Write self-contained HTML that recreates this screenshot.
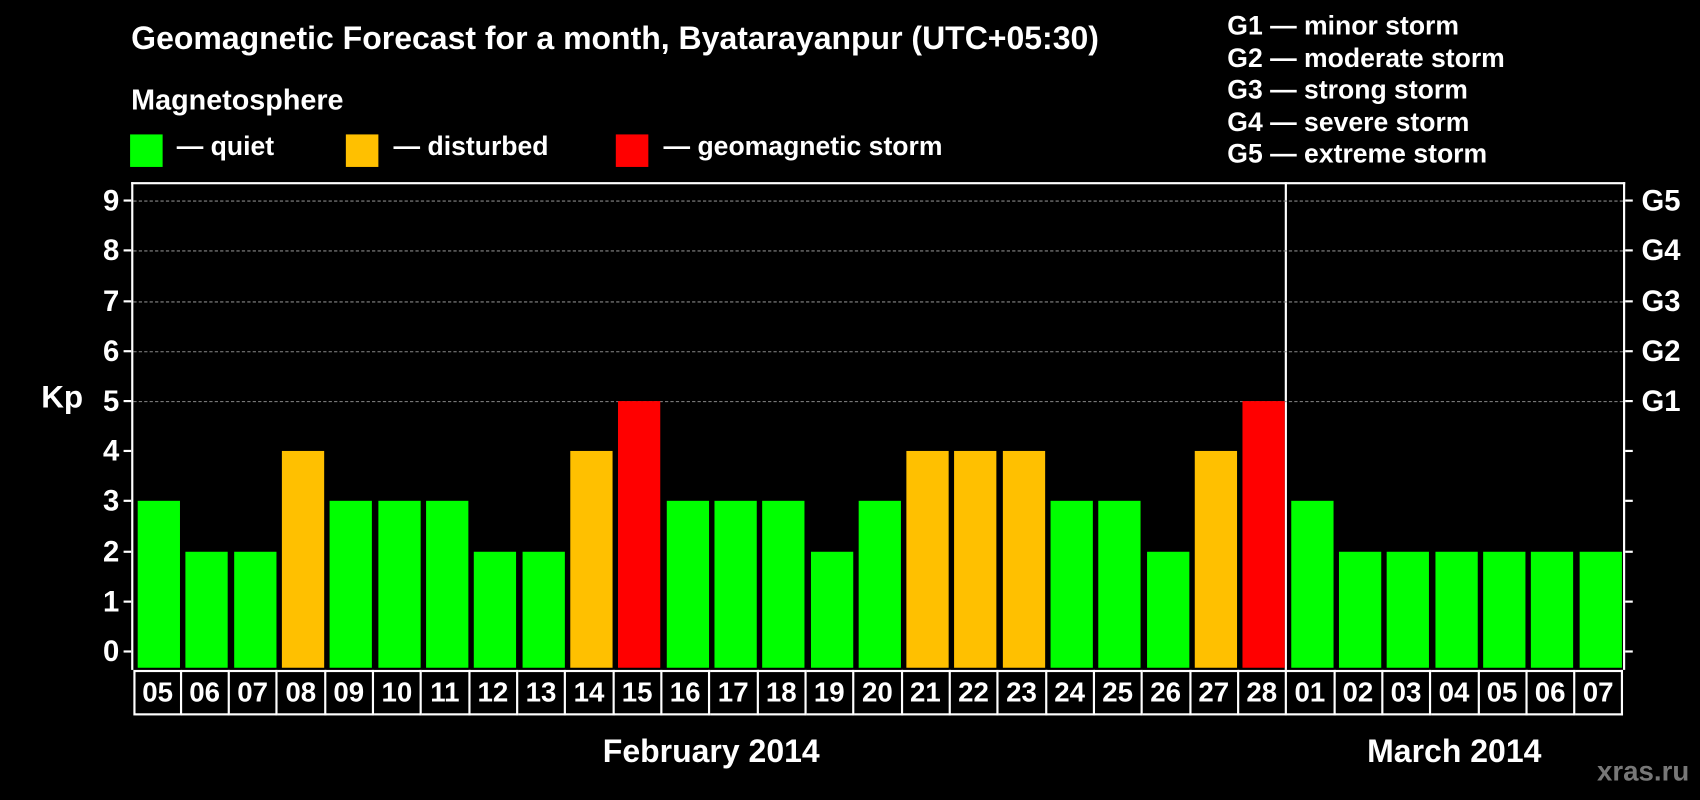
<!DOCTYPE html>
<html><head><style>
html,body{margin:0;padding:0;background:#000;width:1700px;height:800px;overflow:hidden}
#c{position:absolute;left:0;top:0;width:1568px;height:738px;transform:scale(1.08418,1.08401);transform-origin:0 0;font-family:"Liberation Sans",sans-serif;font-weight:bold;color:#fff}
.t{position:absolute;white-space:nowrap}
.bar{position:absolute;width:39px}
.g{background:#00ff00}.y{background:#ffc000}.r{background:#ff0000}
.d{position:absolute;top:618px;height:42px;border:2px solid #fff;border-left:none;box-sizing:border-box;font-size:25.5px;text-align:center;line-height:39px}
.dash{position:absolute;left:123px;width:1374px;border-top:1px dashed #888}
.tk{position:absolute;height:2px;width:7px;background:#fff}
.yl{position:absolute;left:78px;width:32px;text-align:right;font-size:27px;line-height:30px}
.gl{position:absolute;left:1514px;font-size:27px;line-height:30px}
</style></head><body><div id="c">
<div class="t" style="left:121px;top:19px;font-size:29.5px">Geomagnetic Forecast for a month, Byatarayanpur (UTC+05:30)</div>
<div class="t" style="left:121px;top:77px;font-size:26.5px">Magnetosphere</div>
<div style="position:absolute;left:120px;top:124px;width:30px;height:30px;background:#00ff00"></div>
<div class="t" style="left:163px;top:122px;font-size:24.5px">— quiet</div>
<div style="position:absolute;left:319px;top:124px;width:30px;height:30px;background:#ffc000"></div>
<div class="t" style="left:363px;top:122px;font-size:24.5px">— disturbed</div>
<div style="position:absolute;left:568px;top:124px;width:30px;height:30px;background:#ff0000"></div>
<div class="t" style="left:612px;top:122px;font-size:24.5px">— geomagnetic storm</div>
<div class="t" style="left:1132px;top:10px;font-size:24.5px;line-height:29.5px">G1 — minor storm<br>G2 — moderate storm<br>G3 — strong storm<br>G4 — severe storm<br>G5 — extreme storm</div>
<div style="position:absolute;left:121px;top:168px;width:1378px;height:450px;border-top:2px solid #fff;border-left:2px solid #fff;border-right:2px solid #fff;box-sizing:border-box"></div>
<div style="position:absolute;left:1185px;top:168px;width:2px;height:450px;background:#fff"></div>
<div class="t" style="left:38px;top:351px;font-size:29px">Kp</div>
<div class="t" style="left:556px;top:677px;font-size:29.5px">February 2014</div>
<div class="t" style="left:1261px;top:677px;font-size:29.5px">March 2014</div>
<div class="t" style="left:1473px;top:698px;font-size:25.5px;color:#777">xras.ru</div>
</div>
<script>
var c=document.getElementById('c'),h='';
for(var k=0;k<=9;k++){var y=601-46.2*k;
h+='<div class="tk" style="left:114px;top:'+(y-1)+'px"></div><div class="tk" style="left:1499px;top:'+(y-1)+'px"></div>';
h+='<div class="yl" style="top:'+(y-15)+'px">'+k+'</div>';
if(k>=5){h+='<div class="dash" style="top:'+y+'px"></div><div class="gl" style="top:'+(y-15)+'px">G'+(k-4)+'</div>';}}
var v=[3,2,2,4,3,3,3,2,2,4,5,3,3,3,2,3,4,4,4,3,3,2,4,5,3,2,2,2,2,2,2];
var d=['05','06','07','08','09','10','11','12','13','14','15','16','17','18','19','20','21','22','23','24','25','26','27','28','01','02','03','04','05','06','07'];
var w=1374/31;
for(var i=0;i<31;i++){var x=123+w*i;var k=v[i];var cl=k>=5?'r':k==4?'y':'g';var t=601-46.2*k;
h+='<div class="bar '+cl+'" style="left:'+(x+4)+'px;top:'+t+'px;height:'+(616-t)+'px"></div>';
h+='<div class="d" style="left:'+x+'px;width:'+(w+0.5)+'px;'+(i==0?'border-left:2px solid #fff;':'')+'">'+d[i]+'</div>';}
c.insertAdjacentHTML('beforeend',h);
</script>
</body></html>
